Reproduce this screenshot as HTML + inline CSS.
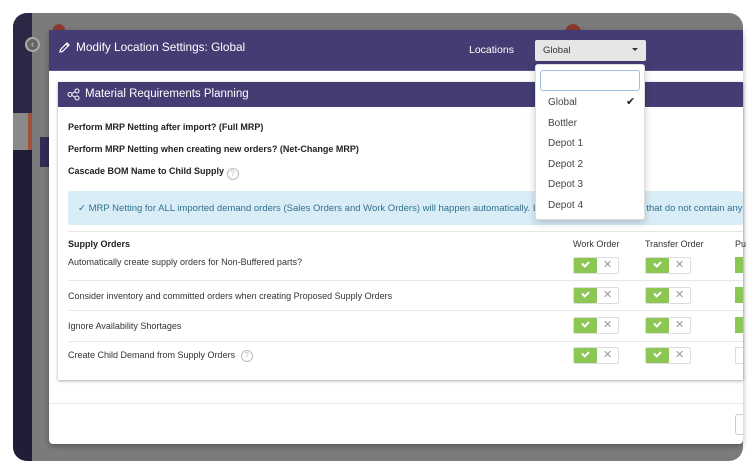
<!DOCTYPE html>
<html><head><style>
*{box-sizing:border-box;margin:0;padding:0}
body{width:756px;height:474px;background:#fff;font-family:"Liberation Sans",sans-serif;position:relative;overflow:hidden}
.abs{position:absolute}
.frame{left:13px;top:13px;width:730px;height:448px;border-radius:14px;overflow:hidden;background:#7b7b7b}
.t{font-size:9px;color:#333}
.b{font-weight:bold;color:#222;font-size:9px}
.tog{position:absolute;width:46px;height:17px;border:1px solid #ddd;border-radius:2px;background:#fff}
.tog .g{position:absolute;left:0;top:0;width:23px;height:15px;background:#8cc653;border-radius:1px}
.tog .g:after{content:"";position:absolute;left:8px;top:3px;width:5px;height:3px;border-left:2px solid #fff;border-bottom:2px solid #fff;transform:rotate(-45deg)}
.tog .x{position:absolute;left:29px;top:0px;font-size:11px;color:#999;line-height:15px}
.hr{position:absolute;left:68px;width:675px;height:1px;background:#e6e6e6}
.mi{position:absolute;left:548px;font-size:10px;color:#444}
</style></head><body>
<div class="abs frame">
  <div class="abs" style="left:0;top:0;width:19px;height:100px;background:#2a2845"></div>
  <div class="abs" style="left:0;top:100px;width:19px;height:37px;background:#8a8a8a"></div>
  <div class="abs" style="left:15px;top:100px;width:4px;height:37px;background:#a4513c"></div>
  <div class="abs" style="left:0;top:137px;width:19px;height:311px;background:#1f1e36"></div>
  <div class="abs" style="left:27px;top:124px;width:9px;height:30px;background:#2f2d55"></div>
  <div class="abs" style="left:12px;top:24px;width:15px;height:15px;border-radius:50%;background:#666;border:2px solid #aaa;color:#ddd;font-size:9px;text-align:center;line-height:11px">‹</div>
  <div class="abs" style="left:40px;top:11px;width:12px;height:8px;border-radius:6px 6px 0 0;background:#8a3a2f"></div>
  <div class="abs" style="left:552px;top:11px;width:16px;height:8px;border-radius:8px 8px 0 0;background:#8a3a2f"></div>
</div>
<!-- modal -->
<div class="abs" style="left:49px;top:30px;width:694px;height:414px;background:#fff;border-radius:0 0 4px 4px;box-shadow:0 2px 6px rgba(0,0,0,.3)">
</div>
<div class="abs" style="left:49px;top:30px;width:694px;height:41px;background:#433d73;border-bottom:1px solid #5a5490"></div>
<svg class="abs" style="left:58px;top:41px" width="13" height="13" viewBox="0 0 13 13"><path d="M2 11 L2.6 8.4 L9 2 L11 4 L4.6 10.4 Z M8 3 L10 5" fill="none" stroke="#fff" stroke-width="1.2"/></svg>
<div class="abs" style="left:76px;top:40px;font-size:11.8px;color:#fff">Modify Location Settings: Global</div>
<div class="abs" style="left:469px;top:44px;font-size:10.5px;color:#fff">Locations</div>
<div class="abs" style="left:535px;top:40px;width:111px;height:21px;background:#e6e6e6;border-radius:2px;font-size:9.5px;color:#333;padding:5px 0 0 8px">Global<span style="position:absolute;right:8px;top:8px;border:3px solid transparent;border-top:3px solid #333"></span></div>
<!-- panel -->
<div class="abs" style="left:58px;top:82px;width:685px;height:298px;background:#fff;box-shadow:0 1px 3px rgba(0,0,0,.35)"></div>
<div class="abs" style="left:58px;top:82px;width:685px;height:25px;background:#433d73"></div>
<svg class="abs" style="left:67px;top:88px" width="13" height="13" viewBox="0 0 13 13"><circle cx="3" cy="6.5" r="2" fill="none" stroke="#fff"/><circle cx="10" cy="3" r="2" fill="none" stroke="#fff"/><circle cx="10" cy="10" r="2" fill="none" stroke="#fff"/><path d="M5 5.5 L8 3.8 M5 7.5 L8 9.2" stroke="#fff"/></svg>
<div class="abs" style="left:85px;top:88px;font-size:11.5px;color:#fff">Material Requirements Planning</div>
<div class="abs b" style="left:68px;top:122px">Perform MRP Netting after import? (Full MRP)</div>
<div class="abs b" style="left:68px;top:144px">Perform MRP Netting when creating new orders? (Net-Change MRP)</div>
<div class="abs b" style="left:68px;top:166px">Cascade BOM Name to Child Supply <span style="display:inline-block;width:12px;height:12px;border:1px solid #bbb;border-radius:50%;color:#bbb;font-size:8px;text-align:center;line-height:10px;font-weight:normal;vertical-align:-2px">?</span></div>
<div class="abs" style="left:68px;top:191px;width:675px;height:34px;background:#d9edf7;border-radius:3px;font-size:9.5px;color:#31708f;padding:12px 0 0 10px;white-space:nowrap;overflow:hidden">✓ MRP Netting for ALL imported demand orders (Sales Orders and Work Orders) will happen automatically. Important: Demand orders that do not contain any child demand</div>
<div class="hr" style="top:231px"></div>
<div class="abs b" style="left:68px;top:239px">Supply Orders</div>
<div class="abs b" style="left:573px;top:239px;font-weight:normal;color:#333">Work Order</div>
<div class="abs b" style="left:645px;top:239px;font-weight:normal;color:#333">Transfer Order</div>
<div class="abs b" style="left:735px;top:239px;font-weight:normal;color:#333">Pu</div>
<div class="abs t" style="left:68px;top:257px">Automatically create supply orders for Non-Buffered parts?</div>
<div class="hr" style="top:280px"></div>
<div class="abs t" style="left:68px;top:291px">Consider inventory and committed orders when creating Proposed Supply Orders</div>
<div class="hr" style="top:310px"></div>
<div class="abs t" style="left:68px;top:321px">Ignore Availability Shortages</div>
<div class="hr" style="top:341px"></div>
<div class="abs t" style="left:68px;top:350px">Create Child Demand from Supply Orders <span style="display:inline-block;width:12px;height:12px;border:1px solid #bbb;border-radius:50%;color:#bbb;font-size:8px;text-align:center;line-height:10px;margin-left:3px">?</span></div>
<div class="tog" style="left:573px;top:257px"><div class="g"></div><span class="x">✕</span></div>
<div class="tog" style="left:645px;top:257px"><div class="g"></div><span class="x">✕</span></div>
<div class="tog" style="left:573px;top:287px"><div class="g"></div><span class="x">✕</span></div>
<div class="tog" style="left:645px;top:287px"><div class="g"></div><span class="x">✕</span></div>
<div class="tog" style="left:573px;top:317px"><div class="g"></div><span class="x">✕</span></div>
<div class="tog" style="left:645px;top:317px"><div class="g"></div><span class="x">✕</span></div>
<div class="tog" style="left:573px;top:347px"><div class="g"></div><span class="x">✕</span></div>
<div class="tog" style="left:645px;top:347px"><div class="g"></div><span class="x">✕</span></div>
<div class="abs" style="left:735px;top:257px;width:8px;height:16px;background:#8cc653"></div>
<div class="abs" style="left:735px;top:287px;width:8px;height:16px;background:#8cc653"></div>
<div class="abs" style="left:735px;top:317px;width:8px;height:16px;background:#8cc653"></div>
<div class="abs" style="left:735px;top:347px;width:8px;height:17px;border:1px solid #ddd;border-right:none"></div>
<div class="abs" style="left:49px;top:403px;width:694px;height:1px;background:#e8e8e8"></div>
<div class="abs" style="left:735px;top:414px;width:8px;height:21px;border:1px solid #ccc;border-right:none;border-radius:3px 0 0 3px"></div>
<!-- dropdown -->
<div class="abs" style="left:535px;top:64px;width:110px;height:156px;background:#fff;border:1px solid #ddd;border-radius:3px;box-shadow:0 3px 8px rgba(0,0,0,.2)"></div>
<div class="abs" style="left:540px;top:70px;width:100px;height:21px;border:1px solid #9cc3e6;border-radius:3px"></div>
<div class="mi" style="top:97px">Global</div>
<div class="abs" style="left:626px;top:95px;font-size:11px;color:#222">✔</div>
<div class="mi" style="top:118px">Bottler</div>
<div class="mi" style="top:138px">Depot 1</div>
<div class="mi" style="top:159px">Depot 2</div>
<div class="mi" style="top:179px">Depot 3</div>
<div class="mi" style="top:200px">Depot 4</div>
</body></html>
